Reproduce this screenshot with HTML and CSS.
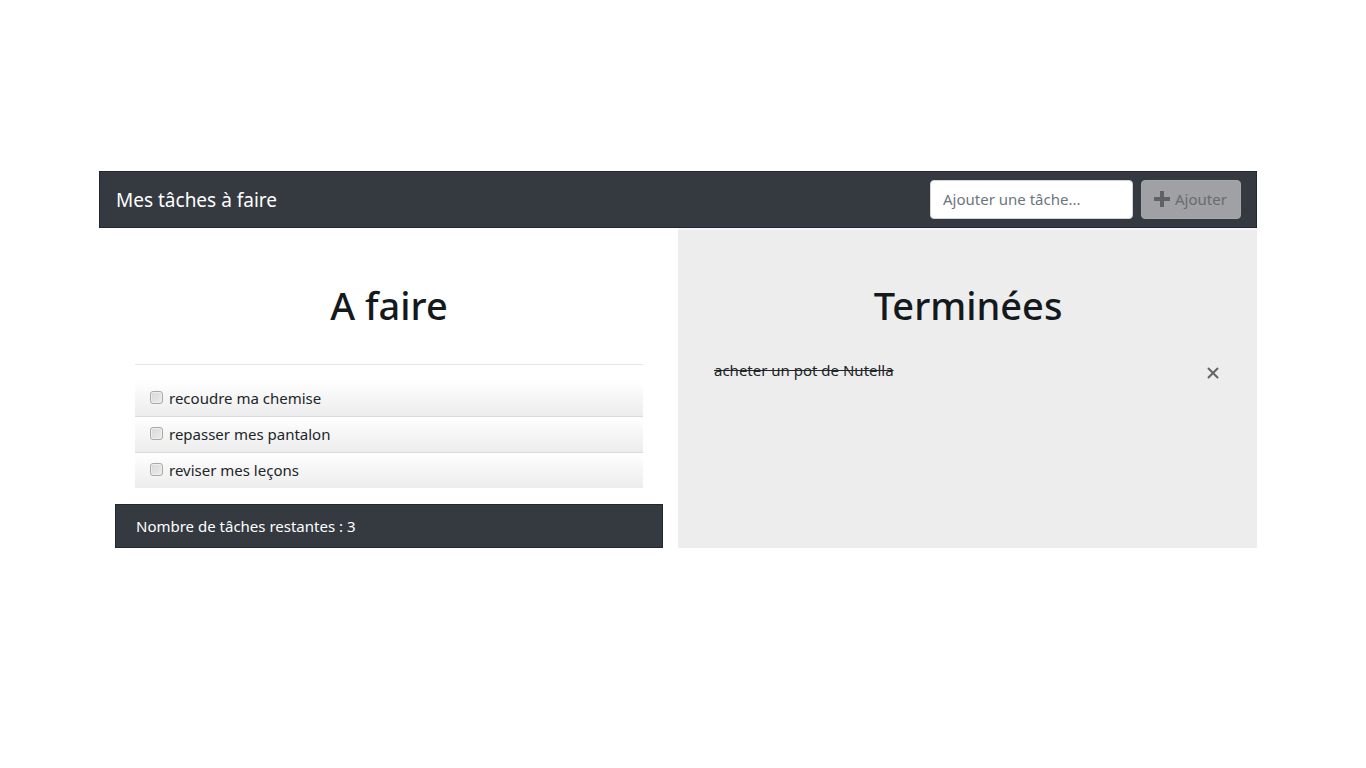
FILE: index.html
```html
<!DOCTYPE html>
<html lang="fr">
<head>
<meta charset="utf-8">
<title>Mes tâches à faire</title>
<link rel="stylesheet" href="styles.css">
</head>
<body>
<div class="app">
  <header class="navbar">
    <a class="brand" href="#">Mes tâches à faire</a>
    <form class="add-form">
      <input class="add-input" type="text" aria-label="Ajouter une tâche" placeholder="Ajouter une tâche...">
      <button class="add-button" type="submit" disabled>
        <svg class="plus" viewBox="0 0 16 16" aria-hidden="true"><path d="M6 0h4v6h6v4h-6v6H6v-6H0V6h6z"/></svg>
        <span>Ajouter</span>
      </button>
    </form>
  </header>
  <main class="columns">
    <section class="todo">
      <div class="panel">
        <h1 class="title">A faire</h1>
        <hr class="rule">
        <ul class="list">
          <li class="item"><label class="task"><input class="check" type="checkbox">recoudre ma chemise</label></li>
          <li class="item"><label class="task"><input class="check" type="checkbox">repasser mes pantalon</label></li>
          <li class="item"><label class="task"><input class="check" type="checkbox">reviser mes leçons</label></li>
        </ul>
      </div>
      <footer class="count">Nombre de tâches restantes : 3</footer>
    </section>
    <section class="done">
      <h1 class="title">Terminées</h1>
      <ul class="list">
        <li class="done-item">
          <span class="done-text">acheter un pot de Nutella</span>
          <button class="remove" type="button" aria-label="Supprimer">
            <svg class="cross" viewBox="0 0 12 12" aria-hidden="true"><path d="M1.500 1.500l9 9M10.500 1.500l-9 9"/></svg>
          </button>
        </li>
      </ul>
    </section>
  </main>
</div>
</body>
</html>
```
FILE: styles.css
```css
* { box-sizing: border-box; }
body {
  margin: 0;
  background: #fff;
  color: #212529;
  font: 15px/24px "Segoe UI", "Noto Sans", "Open Sans", sans-serif;
}
.app { margin: 171px 109px 0 99px; }
.navbar {
  display: flex;
  align-items: center;
  justify-content: space-between;
  padding: 8px 15px 8px 16px;
  background: #343a40;
  border: 1px solid #202831;
}
.brand { color: #fff; font-size: 19px; text-decoration: none; }
.add-form { display: flex; gap: 8px; }
.add-input {
  width: 203px;
  height: 39px;
  padding: 0 12px 2px;
  border: 1px solid #ced4da;
  border-radius: 4px;
  background: #fff;
  color: #495057;
  font: inherit;
}
.add-input::placeholder { color: #6c757d; opacity: 1; }
.add-button {
  display: flex;
  align-items: center;
  gap: 5px;
  width: 100px;
  height: 39px;
  padding: 0 12px 2px;
  border: 1px solid #a5a7aa;
  border-radius: 4px;
  background: #9fa1a4;
  color: #696b6d;
  font: inherit;
}
.plus { flex: none; width: 16px; height: 16px; fill: #5f6163; }
.columns { display: grid; grid-template-columns: 1fr 1fr; }
.todo { padding: 0 15px 0 16px; }
.panel { padding: 52px 20px 16px; }
.title {
  margin: 0;
  font-size: 38px;
  line-height: 50px;
  font-weight: 500;
  text-align: center;
  color: #14191d;
}
.rule { margin: 34px 0 16px; border: 0; border-top: 1px solid #e5e5e5; }
.list { margin: 0; padding: 0; list-style: none; }
.item {
  padding: 5px 15px 6px;
  border-bottom: 1px solid #dadada;
  background: linear-gradient(#fff, #ececec);
}
.item:last-child { border-bottom: 0; }
.task { display: flex; align-items: center; gap: 6px; }
.check {
  appearance: none;
  width: 13px;
  height: 13px;
  margin: 0 0 2px;
  border: 1px solid #a9a9a9;
  border-radius: 3px;
  background: linear-gradient(135deg, #d8d8d8, #ececec);
  box-shadow: inset 0 0 0 1px #eee;
}
.count {
  padding: 9px 20px;
  border: 1px solid #202831;
  background: #343a40;
  color: #fff;
}
.done {
  padding: 50px 35px 0 36px;
  background: #ededed;
  border-top: 2px solid #f8f1f6;
}
.done .list { padding-top: 28px; }
.done-item { display: flex; align-items: center; justify-content: space-between; }
.done-text { text-decoration: line-through; }
.remove {
  display: flex;
  padding: 5px 3px 0;
  border: 0;
  background: none;
}
.cross { width: 12px; height: 12px; stroke: #626467; stroke-width: 2; fill: none; stroke-linecap: round; }
```
